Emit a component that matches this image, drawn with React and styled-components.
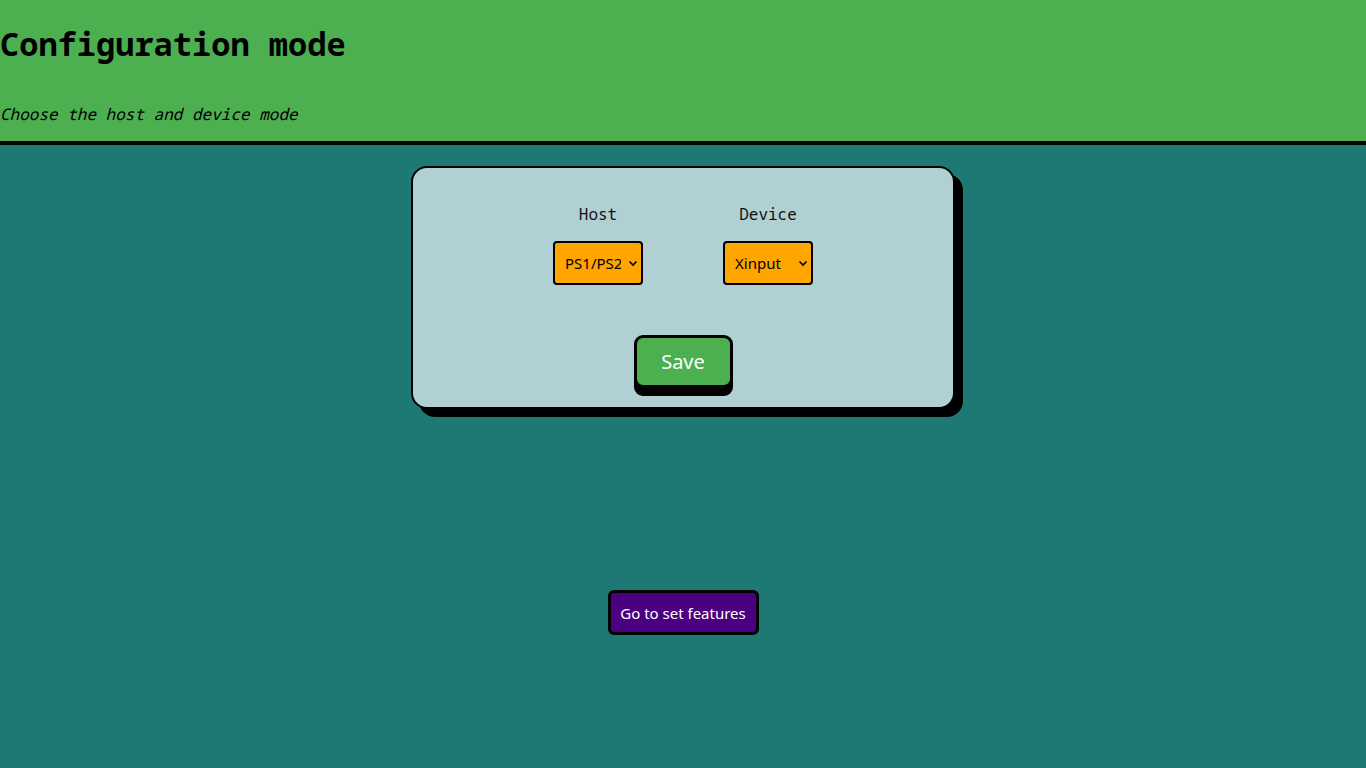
import React from "react";
import styled, { createGlobalStyle } from "styled-components";

const Global = createGlobalStyle`
  html, body { margin: 0; padding: 0; }
  body {
    background: #1e7873;
    min-height: 768px;
    font-family: "Noto Sans Mono", "DejaVu Sans Mono", monospace;
  }
`;

const Header = styled.header`
  background: #4caf50;
  border-bottom: 4px solid #000;
  height: 141px;
  box-sizing: content-box;
  display: flex;
  flex-direction: column;
`;

const Title = styled.h1`
  margin: 25px 0 0;
  font-family: "Noto Sans Mono", "DejaVu Sans Mono", monospace;
  font-weight: bold;
  font-size: 32px;
  line-height: 37px;
  color: #000;
`;

const Subtitle = styled.p`
  margin: 43px 0 0;
  font-family: "Noto Sans Mono", "DejaVu Sans Mono", monospace;
  font-style: italic;
  font-size: 16px;
  line-height: 19px;
  color: #000;
`;

const Main = styled.main`
  display: flex;
  flex-direction: column;
  align-items: center;
  padding-top: 21px;
`;

const Card = styled.section`
  width: 544px;
  box-sizing: border-box;
  background: #b0d0d3;
  border: 2px solid #000;
  border-radius: 16px;
  box-shadow: 8px 8px 0 #000;
  padding: 37px 0 19px;
  display: flex;
  flex-direction: column;
  align-items: center;
`;

const Row = styled.div`
  display: flex;
  justify-content: center;
  gap: 80px;
`;

const Field = styled.div`
  display: flex;
  flex-direction: column;
  align-items: center;
  width: 90px;
`;

const Label = styled.label`
  font-family: "Noto Sans Mono", "DejaVu Sans Mono", monospace;
  font-size: 16px;
  line-height: 19px;
  color: #111;
  margin-bottom: 17px;
`;

const SelectWrap = styled.div`
  position: relative;
  width: 90px;
  height: 44px;
`;

const Select = styled.select`
  appearance: none;
  -webkit-appearance: none;
  width: 90px;
  height: 44px;
  box-sizing: border-box;
  background: #ffa500;
  border: 2px solid #000;
  border-radius: 4px;
  padding: 0 20px 0 10px;
  font-family: "Noto Sans", "Open Sans", sans-serif;
  font-size: 15px;
  color: #000;
  outline: none;
`;

const Chevron = styled.svg`
  position: absolute;
  right: 5px;
  top: 19px;
  width: 10px;
  height: 7px;
  pointer-events: none;
`;

const SaveButton = styled.button`
  margin-top: 50px;
  width: 99px;
  height: 53px;
  box-sizing: border-box;
  background: #4caf50;
  color: #fff;
  border: 3px solid #000;
  border-radius: 9px;
  box-shadow: 0 8px 0 #000;
  font-family: "Noto Sans", "Open Sans", sans-serif;
  font-size: 20px;
  padding: 0;
  cursor: pointer;
`;

const LinkButton = styled.button`
  margin-top: 181px;
  width: 151px;
  height: 45px;
  box-sizing: border-box;
  background: #4b0082;
  color: #fff;
  border: 3px solid #000;
  border-radius: 6px;
  font-family: "Noto Sans", "Open Sans", sans-serif;
  font-size: 15px;
  padding: 0;
  cursor: pointer;
`;

function Dropdown({ id, value }) {
  return (
    <SelectWrap>
      <Select id={id} defaultValue={value}>
        <option>{value}</option>
      </Select>
      <Chevron viewBox="0 0 10 7">
        <path d="M1.5 1.5 L5 5 L8.5 1.5" fill="none" stroke="#000" strokeWidth="1.6" />
      </Chevron>
    </SelectWrap>
  );
}

export default function App() {
  return (
    <>
      <Global />
      <Header>
        <Title>Configuration mode</Title>
        <Subtitle>Choose the host and device mode</Subtitle>
      </Header>
      <Main>
        <Card>
          <Row>
            <Field>
              <Label htmlFor="host">Host</Label>
              <Dropdown id="host" value="PS1/PS2" />
            </Field>
            <Field>
              <Label htmlFor="device">Device</Label>
              <Dropdown id="device" value="Xinput" />
            </Field>
          </Row>
          <SaveButton>Save</SaveButton>
        </Card>
        <LinkButton>Go to set features</LinkButton>
      </Main>
    </>
  );
}
